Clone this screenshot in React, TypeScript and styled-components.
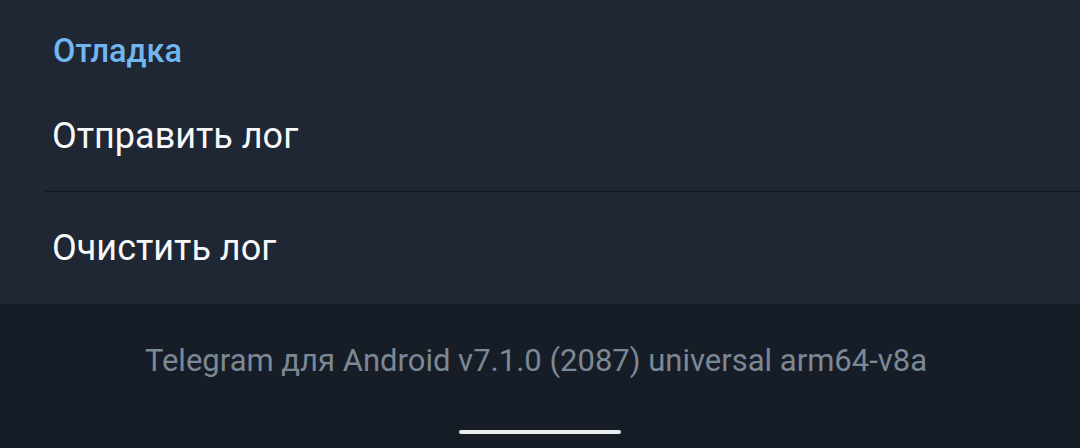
import React from "react";
import styled, { createGlobalStyle } from "styled-components";

const Global = createGlobalStyle`
  html, body { margin: 0; padding: 0; background: #161d26; }
  body { font-family: Roboto, "Noto Sans", sans-serif; }
`;

const Screen = styled.div`
  width: 1080px;
  height: 448px;
  display: flex;
  flex-direction: column;
  overflow: hidden;
`;

const Section = styled.section`
  background: #1e2733;
  display: flex;
  flex-direction: column;
`;

const Header = styled.div`
  height: 80px;
  display: flex;
  align-items: center;
  padding-left: 53px;
  padding-top: 22px;
  box-sizing: border-box;
  color: #71b6ee;
  font-size: 32.5px;
  font-weight: 500;
`;

const Row = styled.div<{ $divider?: boolean }>`
  height: 112px;
  display: flex;
  align-items: center;
  padding-left: 52px;
  box-sizing: border-box;
  color: #f7f8f9;
  font-size: 36px;
  position: relative;
  ${(p) =>
    p.$divider &&
    `
    &::after {
      content: "";
      position: absolute;
      left: 45px;
      right: 0;
      bottom: 0;
      height: 1px;
      background: #10161d;
    }
  `}
`;

const Footer = styled.footer`
  flex: 1;
  background: #161d26;
  display: flex;
  flex-direction: column;
  align-items: center;
`;

const Version = styled.div`
  margin-top: 38px;
  margin-right: 8px;
  color: #7c8896;
  font-size: 31px;
`;

const HomeBar = styled.div`
  margin-top: auto;
  margin-bottom: 14px;
  width: 162px;
  height: 4px;
  border-radius: 2px;
  background: #e9ecef;
`;

export default function App() {
  return (
    <Screen>
      <Global />
      <Section>
        <Header>Отладка</Header>
        <Row $divider>Отправить лог</Row>
        <Row>Очистить лог</Row>
      </Section>
      <Footer>
        <Version>Telegram для Android v7.1.0 (2087) universal arm64-v8a</Version>
        <HomeBar />
      </Footer>
    </Screen>
  );
}
